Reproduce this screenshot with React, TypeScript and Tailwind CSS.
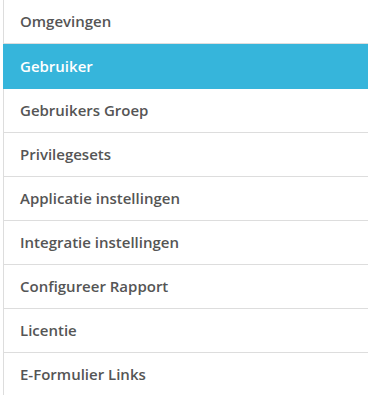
const items = [
  "Omgevingen",
  "Gebruiker",
  "Gebruikers Groep",
  "Privilegesets",
  "Applicatie instellingen",
  "Integratie instellingen",
  "Configureer Rapport",
  "Licentie",
  "E-Formulier Links",
];

export default function App() {
  const active = "Gebruiker";

  return (
    <div className="h-[395px] w-[368px] overflow-hidden bg-white font-['Open_Sans',sans-serif]">
      <ul className="ml-[3px] w-[380px]">
        {items.map((item) => {
          const isActive = item === active;
          return (
            <li
              key={item}
              className={
                isActive
                  ? "flex h-[45px] items-center border-l border-b border-[#36b5db] bg-[#36b5db] pl-[16px] text-[15px] font-semibold text-white"
                  : "flex h-[44px] items-center border-l border-b border-[#dddddd] bg-white pl-[16px] text-[15px] font-semibold text-[#555555]"
              }
            >
              {item}
            </li>
          );
        })}
      </ul>
    </div>
  );
}
